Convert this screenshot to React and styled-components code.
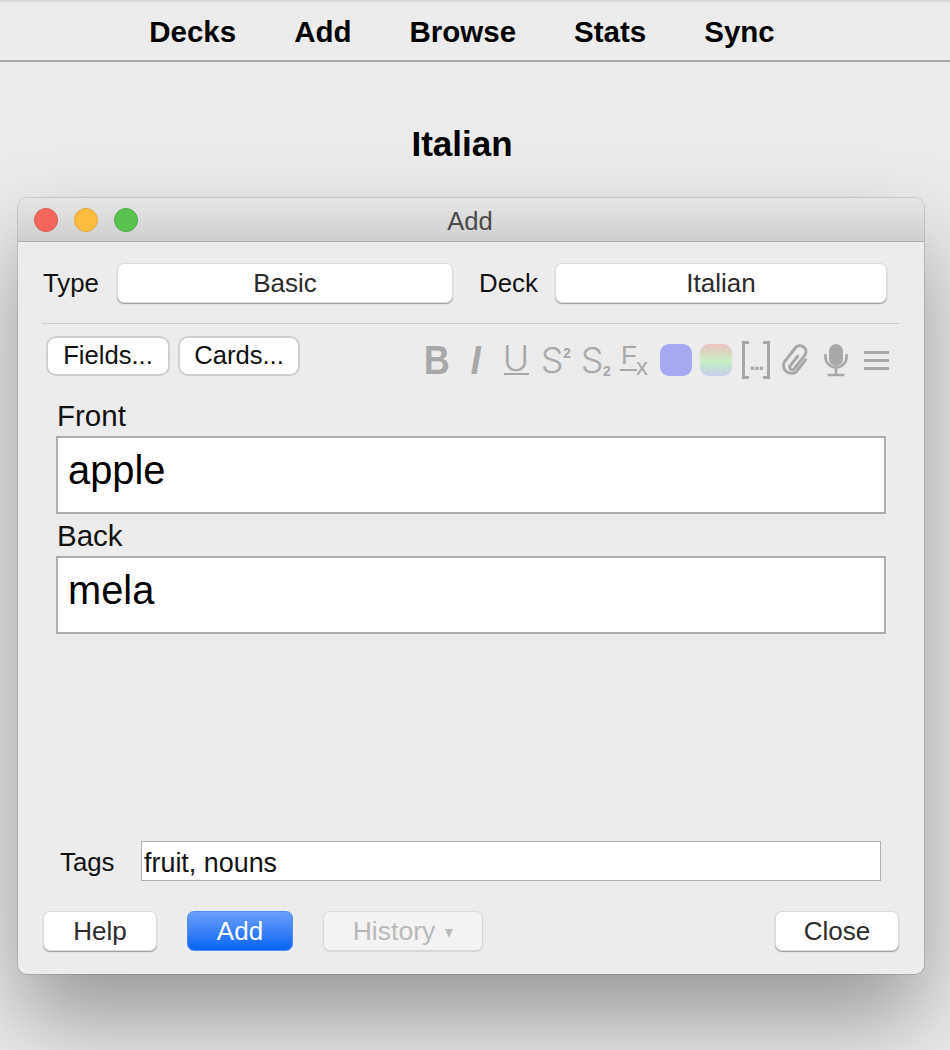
import React from "react";
import styled, { createGlobalStyle } from "styled-components";

const GlobalStyle = createGlobalStyle`
  html, body {
    margin: 0;
    height: 1050px;
    overflow: hidden;
    background: #ececec;
    font-family: "Liberation Sans", Arial, sans-serif;
  }
  * { box-sizing: border-box; }
`;

const NAV_ITEMS = ["Decks", "Add", "Browse", "Stats", "Sync"];

const Nav = styled.nav`
  display: flex;
  justify-content: center;
  gap: 58px;
  height: 62px;
  padding-right: 26px;
  border-top: 2px solid #d8d8d8;
  border-bottom: 2px solid #a9a9a9;
  font-size: 29.5px;
  font-weight: bold;
  line-height: 60px;
  color: #000;
`;

const Heading = styled.h1`
  margin: 0;
  height: 136px;
  padding: 62px 26px 0 0;
  text-align: center;
  font-size: 35px;
  line-height: 40px;
  font-weight: bold;
  color: #000;
`;

const Window = styled.div`
  display: flex;
  flex-direction: column;
  width: 906px;
  height: 776px;
  margin-left: 18px;
  border-radius: 9px;
  background: #ececec;
  box-shadow: 0 0 0 1px rgba(0, 0, 0, 0.12), 0 46px 90px rgba(0, 0, 0, 0.36);
`;

const TitleBar = styled.div`
  position: relative;
  flex: none;
  height: 44px;
  padding-right: 2px;
  border-radius: 9px 9px 0 0;
  border-bottom: 1px solid #adadad;
  background: linear-gradient(#e6e6e6, #cfcfcf);
  text-align: center;
  font-size: 25.6px;
  line-height: 46px;
  color: #4b4b4b;
`;

const Lights = styled.div`
  position: absolute;
  left: 16px;
  top: 10px;
  display: flex;
  gap: 16px;
`;

const Light = styled.span`
  width: 24px;
  height: 24px;
  border-radius: 50%;
  background: ${(p) => p.$color};
  border: 1px solid ${(p) => p.$edge};
`;

const Body = styled.div`
  display: flex;
  flex: 1;
  flex-direction: column;
  padding: 21px 25px 23px;
`;

const TypeRow = styled.div`
  display: flex;
  align-items: center;
  height: 40px;
`;

const RowLabel = styled.span`
  width: ${(p) => p.$width}px;
  margin-left: ${(p) => p.$left || 0}px;
  font-size: 25.8px;
  color: #111;
`;

const TagsLabel = styled(RowLabel)`
  padding-top: 2px;
`;

const Select = styled.div`
  width: ${(p) => p.$width}px;
  height: 40px;
  border: 1px solid #d9d9d9;
  border-radius: 7px;
  background: #fff;
  box-shadow: 0 1px 1px rgba(0, 0, 0, 0.35);
  text-align: center;
  font-size: 26px;
  line-height: 39px;
  color: #2b2b2b;
`;

const Divider = styled.div`
  width: 857px;
  height: 1px;
  margin: 20px 0 12px -1px;
  background: #cdcdcd;
`;

const Toolbar = styled.div`
  display: flex;
  height: 44px;
  padding-left: 3px;
`;

const PlainButton = styled.button`
  width: ${(p) => p.$width}px;
  height: 40px;
  margin-right: 8px;
  padding: 0 0 2px;
  border: 2px solid #cfcfcf;
  border-radius: 10px;
  background: #fff;
  font-family: inherit;
  font-size: 25.6px;
  color: #111;
`;

const IconStrip = styled.div`
  display: flex;
  margin-left: auto;
  margin-right: 3px;
  padding-top: 4px;
  color: #a8a8a8;
`;

const IconCell = styled.span`
  display: flex;
  align-items: center;
  justify-content: center;
  position: relative;
  width: 40px;
  height: 40px;
`;

const BoldGlyph = styled.span`
  display: inline-block;
  margin-left: ${(p) => (p.$italic ? 0 : 2)}px;
  transform: scaleX(0.88);
  font-size: 41px;
  font-weight: bold;
  font-style: ${(p) => (p.$italic ? "italic" : "normal")};
  line-height: 40px;
`;

const ScriptLetter = styled.span`
  margin-left: -8px;
  font-family: "Inter", "Liberation Sans", sans-serif;
  font-weight: 300;
  font-size: 36px;
  line-height: 40px;
`;

const UnderGlyph = styled.span`
  display: flex;
  justify-content: center;
  width: 25px;
  height: 33px;
  margin-top: -3px;
  border-bottom: 2px solid #a8a8a8;
  font-family: "Inter", "Liberation Sans", sans-serif;
  font-weight: 300;
  font-size: 36px;
  line-height: 33px;
`;

// small letters and marks placed over an icon cell
const Mini = styled.span`
  position: absolute;
  left: ${(p) => p.$left}px;
  top: ${(p) => p.$top}px;
  font-size: ${(p) => p.$size}px;
  font-weight: ${(p) => (p.$bold ? "bold" : "normal")};
  line-height: 1;
`;

const FxRule = styled.span`
  position: absolute;
  left: 4px;
  top: 29px;
  width: 17px;
  height: 2px;
  background: #a8a8a8;
`;

const Swatch = styled.span`
  width: 32px;
  height: 32px;
  border-radius: 9px;
  background: ${(p) => p.$bg};
`;

const Cloze = styled.span`
  display: flex;
  align-items: center;
  justify-content: space-between;
  width: 28px;
  height: 32px;
  font-size: 22px;
  font-weight: bold;
  letter-spacing: -1.6px;
  &::before,
  &::after {
    content: "";
    width: 6px;
    height: 32px;
    border: 3px solid #a8a8a8;
  }
  &::before {
    border-right: 0;
  }
  &::after {
    border-left: 0;
  }
`;

const ClozeDots = styled.span`
  padding-top: 5px;
  line-height: 1;
`;

const MenuBars = styled.span`
  width: 25px;
  height: 19px;
  border-top: 3px solid #a8a8a8;
  border-bottom: 3px solid #a8a8a8;
  position: relative;
  &::after {
    content: "";
    position: absolute;
    left: 0;
    right: 0;
    top: 5px;
    height: 3px;
    background: #a8a8a8;
  }
`;

const Fields = styled.div`
  width: 830px;
  margin: 14px 0 0 13px;
`;

const FieldLabel = styled.div`
  height: 42px;
  padding: 1px 0 0 1px;
  font-size: 29.5px;
  line-height: 42px;
  color: #111;
`;

const FieldBox = styled.div`
  height: 78px;
  padding-left: 10px;
  border: 2px solid #adadad;
  background: #fff;
  font-size: 39.8px;
  line-height: 64px;
  color: #000;
`;

const TagsRow = styled.div`
  display: flex;
  align-items: center;
  margin-top: auto;
  padding-left: 17px;
`;

const TagsInput = styled.div`
  width: 740px;
  height: 40px;
  padding-left: 2px;
  border: 1px solid #b0b0b0;
  background: #fff;
  font-size: 26.9px;
  line-height: 42px;
  color: #111;
`;

const Footer = styled.div`
  display: flex;
  gap: 30px;
  margin-top: 30px;
`;

const FootButton = styled.button`
  width: ${(p) => p.$width}px;
  height: 40px;
  padding: 0;
  border: 1px solid #d9d9d9;
  border-radius: 7px;
  background: #fff;
  box-shadow: 0 1px 1px rgba(0, 0, 0, 0.35);
  font-family: inherit;
  font-size: 26px;
  color: #2b2b2b;
  ${(p) => p.$push && "margin-left: auto;"}
`;

const PrimaryButton = styled(FootButton)`
  border: 1px solid #4d8cf2;
  background: linear-gradient(#6b9ffa, #0a64f7);
  box-shadow: none;
  color: #fff;
`;

const DisabledButton = styled(FootButton)`
  background: #f3f3f3;
  box-shadow: 0 1px 1px rgba(0, 0, 0, 0.1);
  font-size: 26.6px;
  color: #b9b9b9;
`;

const Caret = styled.span`
  display: inline-block;
  margin-left: 10px;
  border-left: 4px solid transparent;
  border-right: 4px solid transparent;
  border-top: 9px solid #b9b9b9;
  vertical-align: 2px;
`;

const ClipIcon = () => (
  <svg width="30" height="34" viewBox="0 0 30 34" fill="none" stroke="#a8a8a8" strokeWidth="3" strokeLinecap="round">
    <path
      transform="rotate(38 15 17)"
      d="M14 13V25a2.5 2.5 0 0 0 5 0V8a6 6 0 0 0-12 0V26a8 8 0 0 0 15.5 0V11"
    />
  </svg>
);

const MicIcon = () => (
  <svg width="24" height="33" viewBox="0 0 24 33" fill="none" stroke="#a8a8a8" strokeWidth="2.6">
    <rect x="5" y="0" width="14" height="22" rx="7" fill="#a8a8a8" stroke="none" />
    <path d="M1.5 10v3a10.5 10.5 0 0 0 21 0v-3M12 24v7M3.5 31h17" />
  </svg>
);

export default function App() {
  return (
    <>
      <GlobalStyle />
      <Nav>
        {NAV_ITEMS.map((item) => (
          <span key={item}>{item}</span>
        ))}
      </Nav>
      <Heading>Italian</Heading>
      <Window>
        <TitleBar>
          <Lights>
            <Light $color="#f2665c" $edge="#dd5a50" />
            <Light $color="#fcbc40" $edge="#e2a63a" />
            <Light $color="#5ac24e" $edge="#50a945" />
          </Lights>
          Add
        </TitleBar>
        <Body>
          <TypeRow>
            <RowLabel $width={74}>Type</RowLabel>
            <Select $width={336}>Basic</Select>
            <RowLabel $width={76} $left={26}>Deck</RowLabel>
            <Select $width={332}>Italian</Select>
          </TypeRow>
          <Divider />
          <Toolbar>
            <PlainButton $width={124}>Fields...</PlainButton>
            <PlainButton $width={122}>Cards...</PlainButton>
            <IconStrip>
              <IconCell><BoldGlyph>B</BoldGlyph></IconCell>
              <IconCell><BoldGlyph $italic>I</BoldGlyph></IconCell>
              <IconCell><UnderGlyph>U</UnderGlyph></IconCell>
              <IconCell>
                <ScriptLetter>S</ScriptLetter>
                <Mini $left={27} $top={6} $size={14} $bold>2</Mini>
              </IconCell>
              <IconCell>
                <ScriptLetter>S</ScriptLetter>
                <Mini $left={27} $top={24} $size={14} $bold>2</Mini>
              </IconCell>
              <IconCell>
                <Mini $left={5} $top={2} $size={26}>F</Mini>
                <FxRule />
                <Mini $left={20} $top={15} $size={24}>x</Mini>
              </IconCell>
              <IconCell><Swatch $bg="#a6a8f1" /></IconCell>
              <IconCell><Swatch $bg="linear-gradient(#edc3bf, #c5eec2 55%, #c6cfee)" /></IconCell>
              <IconCell><Cloze><ClozeDots>...</ClozeDots></Cloze></IconCell>
              <IconCell><ClipIcon /></IconCell>
              <IconCell><MicIcon /></IconCell>
              <IconCell><MenuBars /></IconCell>
            </IconStrip>
          </Toolbar>
          <Fields>
            <FieldLabel>Front</FieldLabel>
            <FieldBox>apple</FieldBox>
            <FieldLabel>Back</FieldLabel>
            <FieldBox>mela</FieldBox>
          </Fields>
          <TagsRow>
            <TagsLabel $width={81}>Tags</TagsLabel>
            <TagsInput>fruit, nouns</TagsInput>
          </TagsRow>
          <Footer>
            <FootButton $width={114}>Help</FootButton>
            <PrimaryButton $width={106}>Add</PrimaryButton>
            <DisabledButton $width={160}>History<Caret /></DisabledButton>
            <FootButton $width={124} $push>Close</FootButton>
          </Footer>
        </Body>
      </Window>
    </>
  );
}
